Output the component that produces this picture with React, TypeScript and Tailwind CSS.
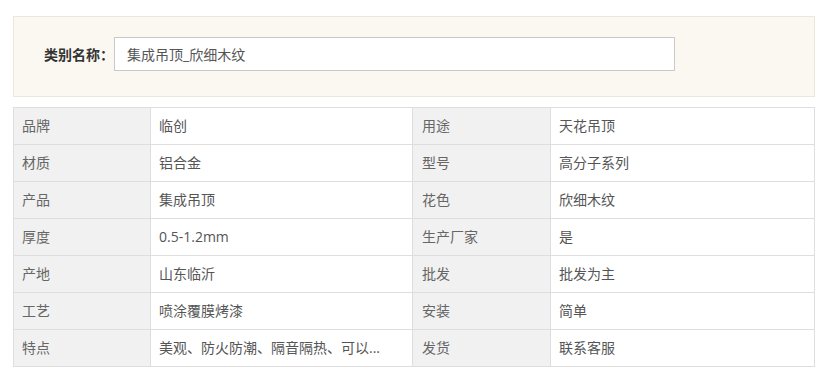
const rows: [string, string, string, string][] = [
  ["品牌", "临创", "用途", "天花吊顶"],
  ["材质", "铝合金", "型号", "高分子系列"],
  ["产品", "集成吊顶", "花色", "欣细木纹"],
  ["厚度", "0.5-1.2mm", "生产厂家", "是"],
  ["产地", "山东临沂", "批发", "批发为主"],
  ["工艺", "喷涂覆膜烤漆", "安装", "简单"],
  ["特点", "美观、防火防潮、隔音隔热、可以...", "发货", "联系客服"],
];

export default function App() {
  return (
    <div
      className="w-[825px] h-[381px] bg-white pt-4 pl-[13px] pr-[10px] text-[14px]"
      style={{ fontFamily: '"Open Sans", "Noto Sans CJK SC", sans-serif' }}
    >
      {/* category name */}
      <div className="h-[81px] bg-[#fbf8f2] border border-[#ebe6de] flex items-start pt-5 pl-[30px]">
        <span className="font-bold text-[#333] w-[70px] h-[34px] flex items-center">类别名称：</span>
        <div className="w-[561px] h-[34px] bg-white border border-[#c9c9c9] flex items-center pl-3 text-[#555]">
          集成吊顶_欣细木纹
        </div>
      </div>

      {/* attributes */}
      <div className="mt-[10px] border-t border-l border-[#dedede]">
        {rows.map(([k1, v1, k2, v2]) => (
          <div key={k1} className="flex h-[37px] border-b border-[#dedede] leading-none">
            <div className="w-[137px] bg-[#f1f1f1] border-r border-[#dedede] flex items-center pl-[8px] text-[#666]">
              {k1}
            </div>
            <div className="w-[262px] border-r border-[#dedede] flex items-center pl-[8px] text-[#555]">
              {v1}
            </div>
            <div className="w-[138px] bg-[#f1f1f1] border-r border-[#dedede] flex items-center pl-[9px] text-[#666]">
              {k2}
            </div>
            <div className="flex-1 border-r border-[#dedede] flex items-center pl-[8px] text-[#555]">
              {v2}
            </div>
          </div>
        ))}
      </div>
    </div>
  );
}
